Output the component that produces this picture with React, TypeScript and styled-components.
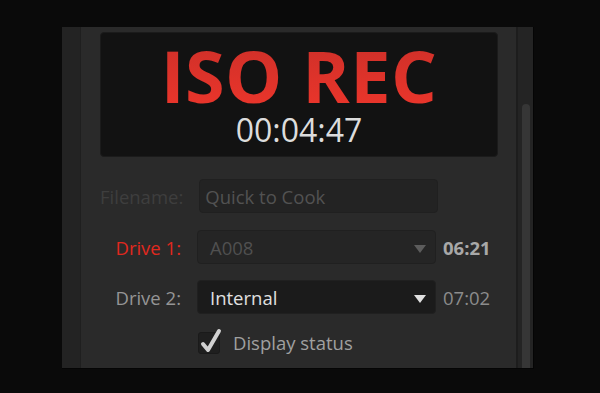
import React from "react";
import styled, { createGlobalStyle } from "styled-components";

const GlobalStyle = createGlobalStyle`
  html, body {
    margin: 0;
    padding: 0;
    background: #0a0a0a;
  }
  body {
    font-family: "Open Sans", "Noto Sans", sans-serif;
  }
`;

const Page = styled.div`
  width: 600px;
  height: 393px;
  padding: 27px 0 0 62px;
  box-sizing: border-box;
  background: #0a0a0a;
  overflow: hidden;
`;

const Panel = styled.div`
  width: 471px;
  height: 341px;
  display: flex;
  background: #2a2a2a;
  border-right: 1px solid #050505;
  border-bottom: 1px solid #050505;
  overflow: hidden;
`;

const Gutter = styled.div`
  flex: 0 0 18px;
  background: #232323;
  border-right: 1px solid #1f1f1f;
`;

const Content = styled.div`
  flex: 1;
  min-width: 0;
  padding: 5px 18px 0 19px;
  display: flex;
  flex-direction: column;
`;

const ScrollColumn = styled.div`
  flex: 0 0 17px;
  background: #242424;
  border-left: 2px solid #1d1d1d;
  padding: 77px 3px 0 4px;
  box-sizing: border-box;
`;

const Thumb = styled.div`
  height: 300px;
  background: #363636;
  border-radius: 5px 5px 0 0;
`;

const Display = styled.div`
  height: 125px;
  background: #121212;
  border: 1px solid #1b1b1b;
  border-radius: 4px;
  display: flex;
  flex-direction: column;
  align-items: center;
  box-sizing: border-box;
  padding-top: 10px;
`;

const RecTitle = styled.div`
  font-family: "Open Sans", sans-serif;
  font-weight: 700;
  font-size: 72px;
  line-height: 64px;
  background: linear-gradient(#cf3029, #ea352b);
  -webkit-background-clip: text;
  background-clip: text;
  -webkit-text-fill-color: transparent;
  letter-spacing: 0.5px;
`;

const Timecode = styled.div`
  font-size: 32px;
  line-height: 30px;
  color: #dcdcdc;
  margin-top: 8px;
`;

const Form = styled.div`
  display: flex;
  flex-direction: column;
  margin-top: 22px;
`;

const Row = styled.div<{ $gap?: number }>`
  display: flex;
  align-items: center;
  margin-top: ${(p) => p.$gap ?? 0}px;
`;

const Label = styled.div<{ $color: string }>`
  flex: 0 0 81px;
  margin-right: 16px;
  text-align: right;
  font-size: 18.5px;
  color: ${(p) => p.$color};
  white-space: nowrap;
`;

const Field = styled.div<{ $bg: string; $color: string; $pad: number }>`
  flex: 0 0 239px;
  height: 34px;
  box-sizing: border-box;
  display: flex;
  align-items: center;
  justify-content: space-between;
  padding: 0 9px 0 ${(p) => p.$pad}px;
  background: ${(p) => p.$bg};
  border: 1px solid #202020;
  border-radius: 4px;
  font-size: 18.5px;
  color: ${(p) => p.$color};
`;

const Arrow = styled.span<{ $color: string }>`
  width: 0;
  height: 0;
  border-left: 6px solid transparent;
  border-right: 6px solid transparent;
  border-top: 8px solid ${(p) => p.$color};
  margin-top: 3px;
`;

const Time = styled.div<{ $bold?: boolean; $color: string }>`
  margin-left: 7px;
  font-size: 18.5px;
  font-weight: ${(p) => (p.$bold ? 700 : 400)};
  color: ${(p) => p.$color};
  white-space: nowrap;
`;

const CheckRow = styled.div`
  display: flex;
  align-items: center;
  margin-top: 16px;
  margin-left: 98px;
`;

const CheckBox = styled.div`
  position: relative;
  flex: 0 0 22px;
  height: 22px;
  background: #1f1f1f;
  border: 1px solid #1a1a1a;
  border-radius: 3px;
  box-sizing: border-box;
`;

const CheckMark = styled.svg`
  position: absolute;
  left: 1px;
  top: -5px;
`;

const CheckLabel = styled.div`
  margin-left: 13px;
  font-size: 18.5px;
  color: #a0a0a0;
`;

export default function App() {
  return (
    <>
      <GlobalStyle />
      <Page>
        <Panel>
          <Gutter />
          <Content>
            <Display>
              <RecTitle>ISO REC</RecTitle>
              <Timecode>00:04:47</Timecode>
            </Display>
            <Form>
              <Row>
                <Label $color="#3e3e3e">Filename:</Label>
                <Field $bg="#232323" $color="#525252" $pad={5}>
                  Quick to Cook
                </Field>
              </Row>
              <Row $gap={17}>
                <Label $color="#e0281e">Drive 1:</Label>
                <Field $bg="#252525" $color="#505050" $pad={12}>
                  A008
                  <Arrow $color="#5c5c5c" />
                </Field>
                <Time $bold $color="#a8a8a8">
                  06:21
                </Time>
              </Row>
              <Row $gap={16}>
                <Label $color="#959595">Drive 2:</Label>
                <Field $bg="#1b1b1b" $color="#e0e0e0" $pad={12}>
                  Internal
                  <Arrow $color="#e0e0e0" />
                </Field>
                <Time $color="#8c8c8c">07:02</Time>
              </Row>
              <CheckRow>
                <CheckBox>
                  <CheckMark width="22" height="26" viewBox="0 0 22 26">
                    <path
                      d="M3 16 L8 22 L19 3"
                      fill="none"
                      stroke="#d0d0d0"
                      strokeWidth="4"
                      strokeLinecap="round"
                      strokeLinejoin="round"
                    />
                  </CheckMark>
                </CheckBox>
                <CheckLabel>Display status</CheckLabel>
              </CheckRow>
            </Form>
          </Content>
          <ScrollColumn>
            <Thumb />
          </ScrollColumn>
        </Panel>
      </Page>
    </>
  );
}
